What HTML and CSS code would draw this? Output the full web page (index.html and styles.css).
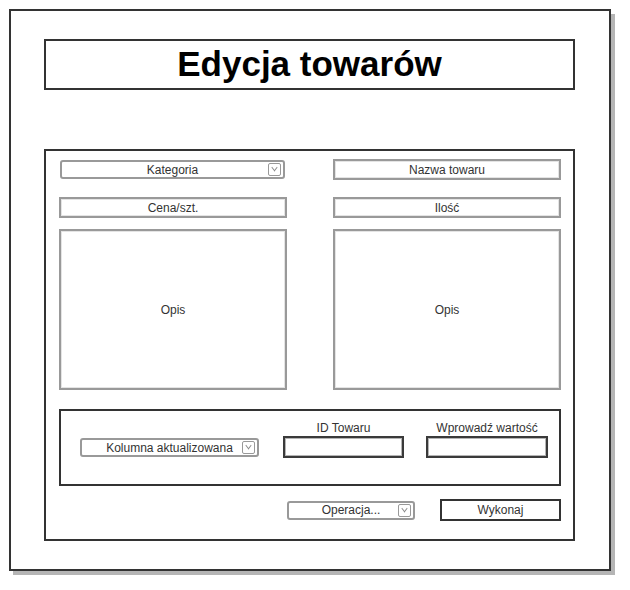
FILE: index.html
```html
<!DOCTYPE html>
<html lang="pl">
<head>
    <meta charset="UTF-8">
    <title>Edycja towarów</title>
    <link rel="stylesheet" href="styles.css">
</head>
<body>
    <div class="sheet">
        <div class="frame">
            <h1 class="title">Edycja towarów</h1>

            <div class="panel">
                <div class="grid">
                    <div class="cell">
                        <div class="select wide">
                            <span>Kategoria</span>
                            <i class="arrow"></i>
                        </div>
                    </div>
                    <div class="field line">Nazwa towaru</div>
                    <div class="field line second">Cena/szt.</div>
                    <div class="field line second">Ilość</div>
                    <div class="field area">Opis</div>
                    <div class="field area">Opis</div>
                </div>

                <!-- aktualizacja pojedynczej kolumny -->
                <div class="update">
                    <div class="select column">
                        <span>Kolumna aktualizowana</span>
                        <i class="arrow"></i>
                    </div>
                    <div class="group id">
                        <label>ID Towaru</label>
                        <div class="input"></div>
                    </div>
                    <div class="group value">
                        <label>Wprowadź wartość</label>
                        <div class="input"></div>
                    </div>
                </div>

                <div class="actions">
                    <div class="select operation">
                        <span>Operacja...</span>
                        <i class="arrow"></i>
                    </div>
                    <div class="button">Wykonaj</div>
                </div>
            </div>
        </div>
    </div>
</body>
</html>
```

FILE: styles.css
```css
* {
    box-sizing: border-box;
}

body {
    margin: 0;
    background: #fff;
    font-family: "Liberation Sans", Arial, sans-serif;
    font-size: 12px;
    color: #333;
}

/* kartka z cieniem pod ramką */
.sheet {
    margin: 9px 0 0 9px;
    width: 606px;
    height: 566px;
    padding: 0 4px 4px 0;
    background: linear-gradient(#b5b5b5, #b5b5b5) 4px 5px / 602px 561px no-repeat;
}

.frame {
    width: 602px;
    height: 562px;
    border: 2px solid #333;
    background: #fff;
    padding: 28px 0 0 33px;
}

.title {
    margin: 0;
    width: 531px;
    height: 51px;
    border: 2px solid #333;
    display: flex;
    align-items: center;
    justify-content: center;
    font-size: 35px;
    font-weight: bold;
    color: #000;
    padding-bottom: 1px;
}

.panel {
    margin-top: 59px;
    width: 531px;
    height: 392px;
    border: 2px solid #333;
    padding: 8px 12px 0 13px;
}

.grid {
    display: grid;
    grid-template-columns: 228px 228px;
    column-gap: 46px;
}

.field {
    border: 2px solid #999;
    box-shadow: inset 0 0 0 1px #e4e4e4;
    display: flex;
    align-items: center;
    justify-content: center;
}

.field.line {
    height: 21px;
}

.field.second {
    margin-top: 17px;
}

.field.area {
    height: 161px;
    margin-top: 11px;
}

.cell {
    height: 21px;
    padding: 1px 2px 1px 1px;
}

.select {
    position: relative;
    height: 19px;
    border: 2px solid #999;
    border-radius: 3px;
    display: flex;
    align-items: center;
    justify-content: center;
}

.select.wide {
    height: 100%;
}

.arrow {
    position: absolute;
    right: 2px;
    top: 1px;
    width: 13px;
    height: 13px;
    border: 1px solid #999;
    border-radius: 2px;
}

.arrow::after {
    content: "";
    position: absolute;
    left: 3px;
    top: 1px;
    width: 4px;
    height: 4px;
    border-right: 1px solid #888;
    border-bottom: 1px solid #888;
    transform: rotate(45deg) skew(8deg, 8deg);
}

.update {
    margin-top: 19px;
    width: 502px;
    height: 77px;
    border: 2px solid #333;
    display: flex;
    align-items: flex-end;
    padding: 0 0 26px 19px;
}

.select.column {
    width: 179px;
    margin-bottom: 1px;
}

.group {
    display: flex;
    flex-direction: column;
    align-items: center;
}

.group label {
    line-height: 14px;
    margin-bottom: 1px;
}

.group.id {
    margin-left: 24px;
    width: 121px;
}

.group.value {
    margin-left: 22px;
    width: 122px;
}

.input {
    width: 100%;
    height: 22px;
    border: 2px solid #3a3a3a;
    box-shadow: inset 0 0 0 1px #b4b4b4;
}

.actions {
    margin-top: 13px;
    display: flex;
    justify-content: flex-end;
    align-items: center;
}

.select.operation {
    width: 128px;
}

.button {
    margin-left: 25px;
    width: 121px;
    height: 22px;
    border: 2px solid #333;
    display: flex;
    align-items: center;
    justify-content: center;
}
```
